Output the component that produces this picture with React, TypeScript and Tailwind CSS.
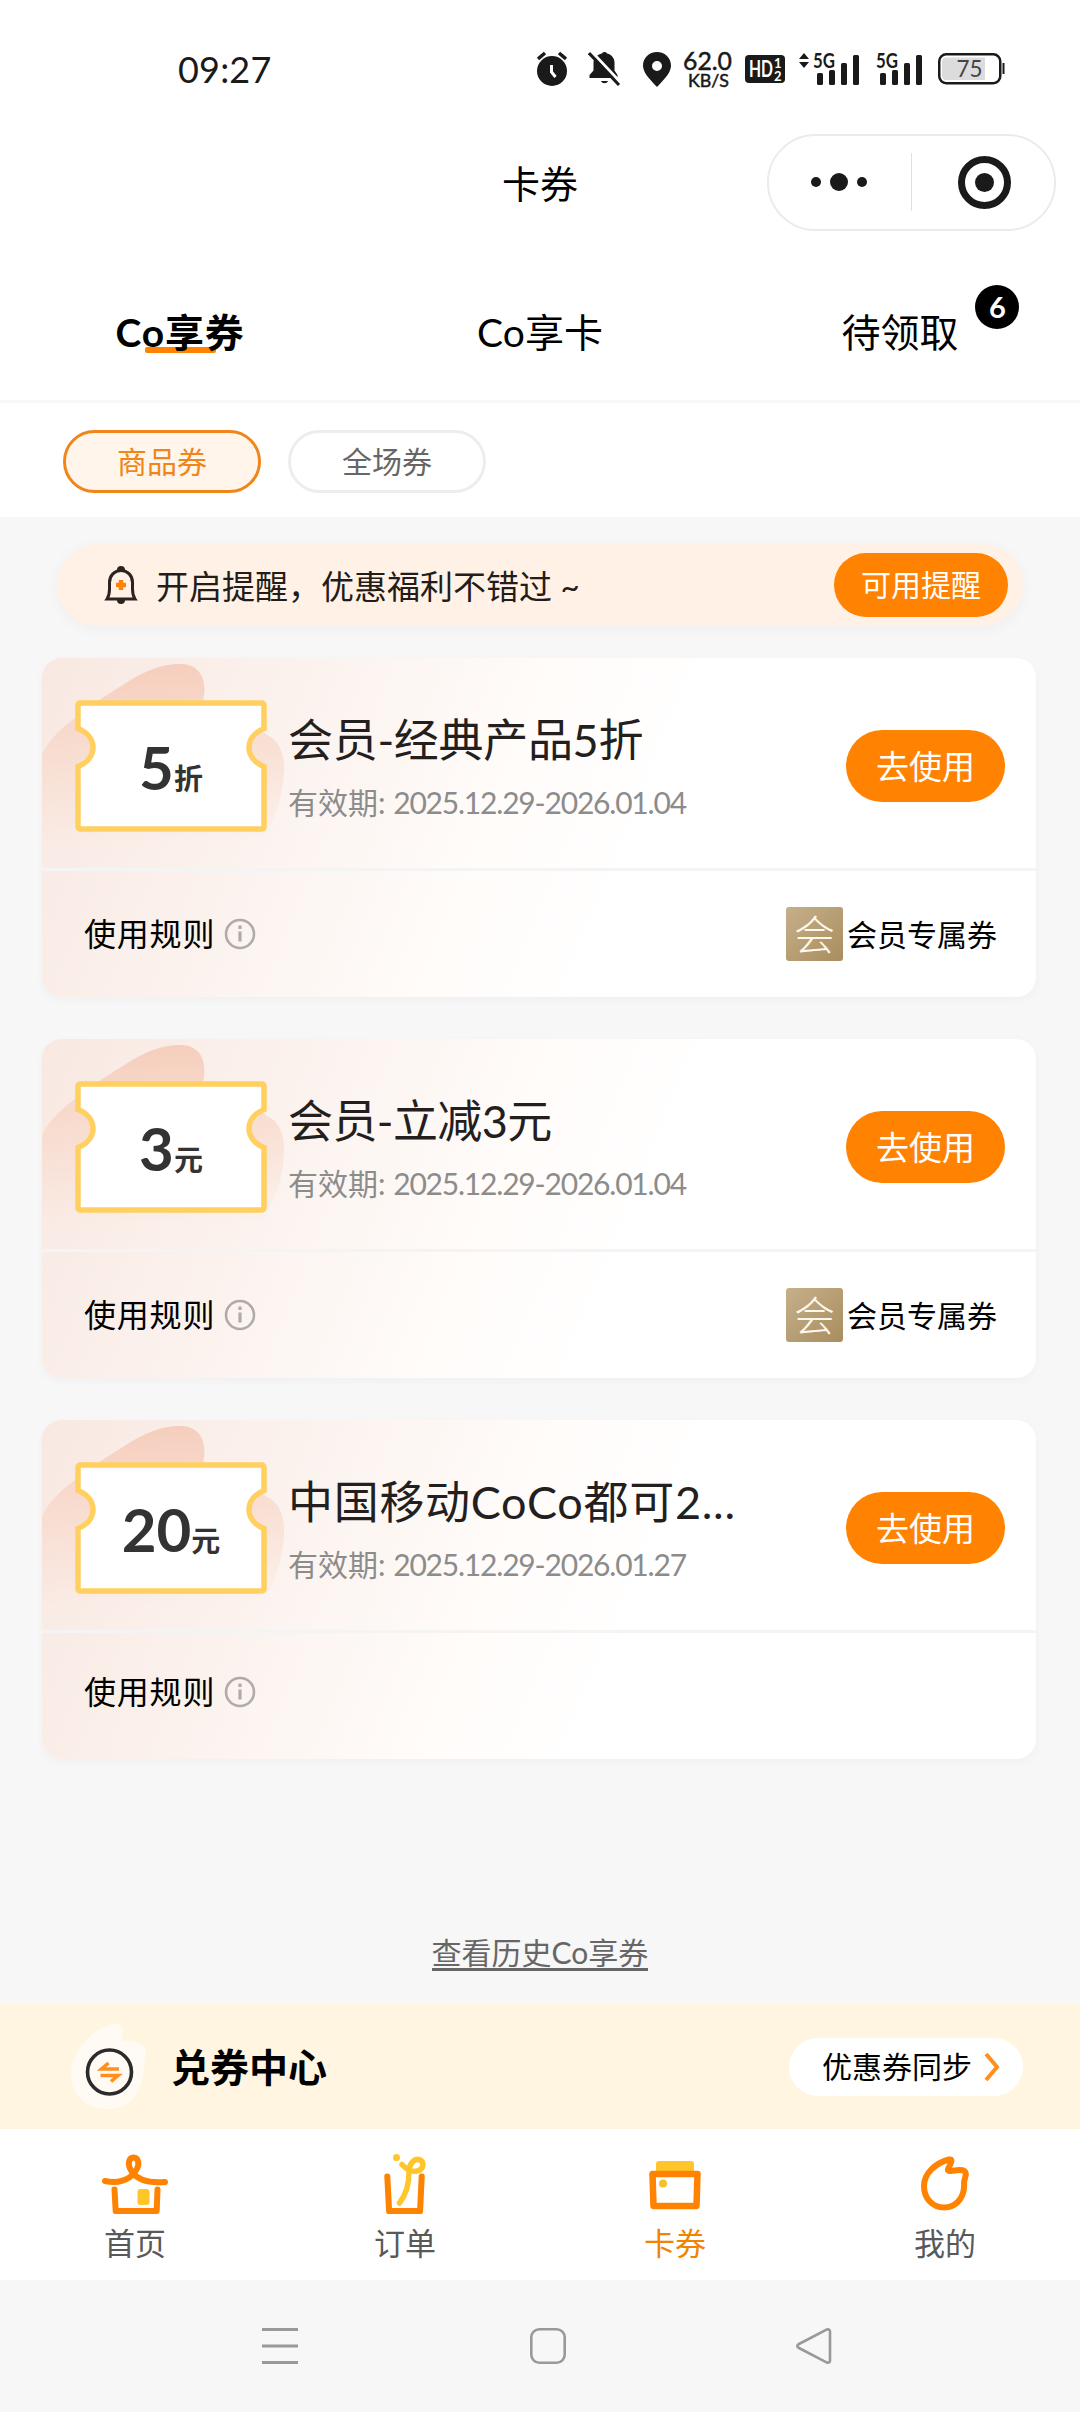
const coupons = [
  { amount: '5', unit: '折', title: '会员-经典产品5折', tracking: 'tracking-[-0.3px]', valid: '2025.12.29-2026.01.04', member: true },
  { amount: '3', unit: '元', title: '会员-立减3元', tracking: 'tracking-[-0.6px]', valid: '2025.12.29-2026.01.04', member: true },
  { amount: '20', unit: '元', title: '中国移动CoCo都可2...', tracking: 'tracking-[0.7px]', valid: '2025.12.29-2026.01.27', member: false },
]

function Signal({ arrows }: { arrows?: boolean }) {
  return (
    <svg width="62" height="36" viewBox="0 0 62 36" fill="#1a1a1a" className="overflow-visible">
      {arrows && <path d="M6 2l5 6H1zM6 17l5-6H1z" />}
      <text x="15" y="17" fontSize="20" fontWeight="700" textLength="22" lengthAdjust="spacingAndGlyphs">5G</text>
      <rect x="19" y="22" width="6" height="12" rx="1.5" />
      <rect x="31" y="19" width="6" height="15" rx="1.5" />
      <rect x="43" y="12" width="6" height="22" rx="1.5" />
      <rect x="55" y="4" width="6" height="30" rx="1.5" />
    </svg>
  )
}

function StatusBar() {
  return (
    <div className="flex h-[112px] items-center pt-[26px] pl-[178px] text-[#1a1a1a]">
      <span className="w-[359px] text-[36px] leading-none tracking-[0.2px]">09:27</span>

      <svg width="30" height="36" viewBox="0 0 30 36" className="mr-[21px]">
        <circle cx="15" cy="20" r="15" fill="#1a1a1a" />
        <path d="M1 8l7-6M29 8l-7-6" stroke="#1a1a1a" strokeWidth="3.5" />
        <path d="M14.5 14v7l4 5" fill="none" stroke="#fff" strokeWidth="3" />
      </svg>

      <svg width="33" height="36" viewBox="0 0 33 36" className="mr-[22px]">
        <path d="M14 2.5c1-2 4-2 5 0c5 1 7.500 5 7.500 9v8l3 4.500v3H1.500v-3l4-4.500v-8c0-4 3.500-8 8.500-9z" fill="#1a1a1a" />
        <path d="M13 30h7c-1 3-6 3-7 0z" fill="#1a1a1a" />
        <path d="M3 0l31 33" stroke="#fff" strokeWidth="3" />
        <path d="M1 2l30 32" stroke="#1a1a1a" strokeWidth="3" />
      </svg>

      <svg width="28" height="36" viewBox="0 0 28 36" className="mr-[12px]">
        <path fillRule="evenodd" d="M14 1c8 0 14 6 14 13.500c0 7-6 13-14 21.500c-8-8.500-14-14.500-14-21.500c0-7.500 6-13.500 14-13.500zm0 9a5 5 0 1 0 0 10a5 5 0 0 0 0-10z" fill="#1a1a1a" />
      </svg>

      <svg width="50" height="38" viewBox="0 0 50 38" className="mr-[12px] overflow-visible" fill="#1a1a1a" stroke="#1a1a1a" strokeWidth="0.5">
        <text x="0" y="20" fontSize="25" textLength="49" lengthAdjust="spacingAndGlyphs">62.0</text>
        <text x="5" y="37" fontSize="17" textLength="41" lengthAdjust="spacingAndGlyphs">KB/S</text>
      </svg>

      <svg width="40" height="28" viewBox="0 0 40 28" className="mr-[13px] overflow-visible" fill="#fff">
        <rect width="40" height="28" rx="4" fill="#1a1a1a" />
        <text x="4" y="22" fontSize="23" fontWeight="700" textLength="24" lengthAdjust="spacingAndGlyphs">HD</text>
        <text x="29" y="13" fontSize="13" fontWeight="700">1</text>
        <text x="29" y="25.500" fontSize="13" fontWeight="700">2</text>
      </svg>

      <Signal arrows />
      <div className="ml-[1px]"><Signal /></div>

      <svg width="68" height="32" viewBox="0 0 68 32" className="ml-[15px]">
        <rect x="1.250" y="1.250" width="61" height="29" rx="7" fill="#fff" stroke="#1a1a1a" strokeWidth="2.500" />
        <path d="M8 4.500h39v22.500H8a4 4 0 0 1-4-4V8.500a4 4 0 0 1 4-4z" fill="#dcdcdc" />
        <path d="M65.500 10v11" stroke="#1a1a1a" strokeWidth="2" />
        <text x="18.500" y="24" fontSize="23" fill="#444" textLength="26" lengthAdjust="spacingAndGlyphs">75</text>
      </svg>
    </div>
  )
}

function Header() {
  return (
    <div className="grid h-[140px] grid-cols-3 items-center">
      <div />
      <h1 className="pt-[1px] text-center text-[38px] leading-none">卡券</h1>
      <div className="ml-[47px] flex h-[97px] w-[289px] items-center rounded-full border-2 border-[#ebebeb]">
        <div className="flex w-[142px] items-center justify-center gap-[9px] pr-[2px]">
          <span className="size-[10px] rounded-full bg-[#1a1a1a]" />
          <span className="size-[18px] rounded-full bg-[#1a1a1a]" />
          <span className="size-[10px] rounded-full bg-[#1a1a1a]" />
        </div>
        <div className="h-[58px] w-px bg-[#e0e0e0]" />
        <div className="ml-[46px] flex size-[53px] items-center justify-center rounded-full border-[7px] border-[#1a1a1a]">
          <span className="size-[19px] rounded-full bg-[#1a1a1a]" />
        </div>
      </div>
    </div>
  )
}

function Tabs() {
  return (
    <div className="grid h-[151px] grid-cols-3 items-center border-b-[3px] border-[#f8f8f8] pt-[12px] text-center text-[39px] leading-none text-black">
      <div>
        <span className="relative inline-block font-bold tracking-[0.8px]">
          <span className="absolute -bottom-px left-[29px] h-[6px] w-[71px] rounded-[2px] bg-[#ff8200]" />
          <span className="relative">Co享券</span>
        </span>
      </div>
      <div>Co享卡</div>
      <div>
        <span className="relative inline-block">
          待领取
          <span className="absolute -top-[28px] left-[134px] flex size-[44px] items-center justify-center rounded-full bg-black text-[29px] font-bold text-white">
            6
          </span>
        </span>
      </div>
    </div>
  )
}

function BellIcon() {
  return (
    <svg width="34" height="40" viewBox="0 0 34 40">
      <path d="M13 5a4 4 0 0 1 8 0z" fill="#2d2320" />
      <path d="M3 34c2-3 2.500-6 2.500-10v-6.500c0-7 5-12 11.500-12s11.500 5 11.500 12v6.500c0 4 .5 7 2.500 10z" fill="none" stroke="#2d2320" strokeWidth="3" />
      <path d="M13 35h8a4 4 0 0 1-8 0z" fill="#2d2320" />
      <path d="M17 15v10M12 20h10" stroke="#ff8200" strokeWidth="4.500" />
    </svg>
  )
}

function Notice() {
  return (
    <div className="mx-[57px] flex h-[82px] items-center rounded-full bg-[#fff1e6] pr-[15px] pl-[47px] shadow-[0_3px_14px_rgba(0,0,0,0.04)]">
      <BellIcon />
      <p className="ml-[18px] flex-1 pt-[2px] text-[33px] leading-none whitespace-nowrap text-[#231c18]">
        开启提醒，优惠福利不错过 ~
      </p>
      <button className="h-[64px] w-[174px] rounded-full bg-[#ff8200] pb-[2px] text-[30px] leading-none text-white">可用提醒</button>
    </div>
  )
}

function Ticket({ amount, unit }: { amount: string; unit: string }) {
  return (
    <div className="relative h-[132px] w-[192px] shrink-0">
      <svg width="192" height="132" viewBox="0 0 192 132" className="absolute inset-0">
        <path
          d="M3 5a2 2 0 0 1 2-2H187a2 2 0 0 1 2 2V28.500c-20 8-20 30 0 38V127a2 2 0 0 1-2 2H5a2 2 0 0 1-2-2V66.500c20-8 20-30 0-38z"
          fill="#fff"
          stroke="#ffd060"
          strokeWidth="5.500"
        />
      </svg>
      <div className="relative flex h-full items-baseline justify-center pt-[37px] font-bold text-[#333]">
        <span className="text-[60px] leading-none">{amount}</span>
        <span className="text-[29px] leading-none">{unit}</span>
      </div>
    </div>
  )
}

function PeachBackdrop({ id }: { id: string }) {
  return (
    <svg width="260" height="205" viewBox="0 0 260 205" className="absolute top-0 left-0">
      <defs>
        <linearGradient id={id} x1="0" y1="0" x2="0" y2="1">
          <stop offset="0" stopColor="#f4c3ae" stopOpacity="0.75" />
          <stop offset="0.500" stopColor="#f8d3c2" stopOpacity="0.500" />
          <stop offset="0.900" stopColor="#f8d3c2" stopOpacity="0" />
        </linearGradient>
      </defs>
      <path
        d="M0 96C8 80 20 70 33 60C52 45 60 40 84 25C102 13 120 6 138 6C158 6 166 22 161 43C158 60 152 72 158 76C180 72 215 66 225 77C238 82 243 98 242 115C240 150 225 185 200 205H0z"
        fill={`url(#${id})`}
      />
    </svg>
  )
}

function CouponCard({ coupon, index }: { coupon: (typeof coupons)[number]; index: number }) {
  return (
    <div className="relative h-[339px] rounded-[20px] bg-[linear-gradient(112deg,#f8e8e1_0%,#fcf4f0_28%,#fffcfa_46%,#ffffff_60%)] shadow-[0_3px_10px_rgba(0,0,0,0.03)]">
      <div className="absolute inset-0 overflow-hidden rounded-[20px]">
        <PeachBackdrop id={`peach-${index}`} />
      </div>

      <div className="relative flex h-[213px] w-[996px] items-center border-b-[3px] border-[#f4f4f4] pt-[6px] pr-[33px] pl-[33px]">
        <Ticket amount={coupon.amount} unit={coupon.unit} />
        <div className="ml-[21px] flex-1 pt-[4px]">
          <h2 className={`text-[45px] leading-[50px] whitespace-nowrap text-[#231f1f] ${coupon.tracking}`}>{coupon.title}</h2>
          <p className="mt-[17px] text-[30px] leading-[40px] whitespace-nowrap text-[#8c8c8c]">
            有效期: <span className="tracking-[-1.2px]">{coupon.valid}</span>
          </p>
        </div>
        <button className="h-[72px] w-[159px] rounded-full bg-[#ff8200] text-[33px] leading-none text-white">去使用</button>
      </div>

      <div className={`relative flex items-center pr-[39px] pl-[42px] ${coupon.member ? 'h-[126px]' : 'h-[118px]'}`}>
        <span className="text-[32px] leading-none tracking-[0.8px] text-black">使用规则</span>
        <svg width="32" height="32" viewBox="0 0 32 32" className="ml-[9px]" fill="none" stroke="#b0abaa">
          <circle cx="16" cy="16" r="14" strokeWidth="2.600" />
          <path d="M16 13.500v10M16 7.500v3.500" strokeWidth="3.200" />
        </svg>
        {coupon.member && (
          <div className="ml-auto flex items-center">
            <span className="flex h-[54px] w-[57px] items-center justify-center rounded-[3px] bg-linear-to-br from-[#c6b08a] to-[#a88d5e] text-[41px] leading-none font-light text-[#fff8ec]">
              会
            </span>
            <span className="ml-[4px] text-[30px] leading-none text-black">会员专属券</span>
          </div>
        )}
      </div>
    </div>
  )
}

function ExchangeBar() {
  return (
    <div className="flex h-[125px] items-center bg-[#fff5e0] pr-[57px] pl-[70px]">
      <svg width="78" height="88" viewBox="0 0 78 88">
        <path d="M1 50C2 26 26 2 46 1C55 1 54 10 51 18C63 17 78 20 76 32C73 40 75 48 73 54C68 76 55 86 38 86C16 86 1 72 1 50z" fill="#fffaf3" />
        <circle cx="39.500" cy="49" r="22" fill="none" stroke="#2b2b2b" strokeWidth="3.600" />
        <path d="M49 46H31.500l7-6M30.500 52.500H48l-7 6" fill="none" stroke="#ff9020" strokeWidth="3.600" />
      </svg>
      <span className="ml-[23px] pt-[2px] text-[39px] leading-none font-bold text-black">兑券中心</span>
      <button className="ml-auto flex h-[58px] w-[234px] items-center rounded-full bg-white pl-[33px] text-[30px] leading-none text-black">
        <span className="pb-[2px]">优惠券同步</span>
        <svg width="16" height="28" viewBox="0 0 16 28" className="ml-[12px]">
          <path d="M2 1l11 13L2 27" fill="none" stroke="#ff9020" strokeWidth="4" />
        </svg>
      </button>
    </div>
  )
}

function HomeIcon() {
  return (
    <svg width="68" height="62" viewBox="0 0 68 62" fill="none" stroke="#ff8200" strokeWidth="6" strokeLinecap="round" strokeLinejoin="round">
      <path d="M4 28c13 3 24-1 30-9c6-8 3-14.500-1.500-14.500s-7 6.500-1.500 14.500c6 8 17 11.500 33 10" />
      <path d="M13.500 36.500l1.200 21.500h41l.8-21.500" />
      <rect x="36.500" y="36" width="12" height="16" rx="3" fill="#ffc62b" stroke="none" />
    </svg>
  )
}

function OrderIcon() {
  return (
    <svg width="68" height="62" viewBox="0 0 68 62" fill="none" strokeWidth="6" strokeLinecap="round" strokeLinejoin="round">
      <path d="M16.300 23.500l1.800 34.500h31l1.600-34.500" stroke="#ff8200" />
      <path d="M28.500 50c7-9 9.500-18 9.500-31c0-8 5-13.500 10-12.500c6 1.500 5 10-2 11.500c-6 1-11-2-15-6.500" stroke="#ffc62b" strokeWidth="5.500" />
      <circle cx="25.500" cy="4.500" r="3.500" fill="#ffc62b" />
    </svg>
  )
}

function CardIcon() {
  return (
    <svg width="68" height="62" viewBox="0 0 68 62">
      <path d="M15 11a3 3 0 0 1 3-3h32a3 3 0 0 1 3 3v9H15z" fill="#ffc62b" />
      <path d="M11.500 21h45l-1 32h-43z" fill="#fff" stroke="#ff8200" strokeWidth="6.500" strokeLinejoin="round" />
      <circle cx="22" cy="30.500" r="4" fill="#f6bf2d" />
    </svg>
  )
}

function MineIcon() {
  return (
    <svg width="68" height="62" viewBox="0 0 68 62">
      <path
        d="M13 33C13 20 25 10 38 6.500C41 6 41 8 39.500 11L37 16C36.500 18 38 18 40 18C45 17.500 50 16 53.500 18C56 20 54.500 23 53.500 27C52.500 31 53.500 31 53 35C52 46 44 54.500 33.500 54.500C21 54.500 13 45 13 33z"
        fill="none"
        stroke="#ff8200"
        strokeWidth="6"
        strokeLinejoin="round"
      />
    </svg>
  )
}

function TabBar() {
  const items = [
    { label: '首页', icon: <HomeIcon /> },
    { label: '订单', icon: <OrderIcon /> },
    { label: '卡券', icon: <CardIcon />, active: true },
    { label: '我的', icon: <MineIcon /> },
  ]

  return (
    <nav className="grid h-[151px] grid-cols-4 bg-white pt-[24px]">
      {items.map((item) => (
        <div key={item.label} className="flex flex-col items-center">
          {item.icon}
          <span className={`mt-[13px] text-[31px] leading-none ${item.active ? 'text-[#f08300]' : 'text-[#595959]'}`}>
            {item.label}
          </span>
        </div>
      ))}
    </nav>
  )
}

function SystemNav() {
  return (
    <div className="flex h-[132px] items-center bg-[#f7f7f7] pl-[261px]">
      <svg width="38" height="38" viewBox="0 0 38 38" stroke="#999" strokeWidth="3">
        <path d="M1 2.500h36M1 19h36M1 35.500h36" />
      </svg>
      <svg width="38" height="38" viewBox="0 0 38 38" className="ml-[230px]" fill="none" stroke="#999" strokeWidth="2.600">
        <rect x="2.300" y="2.300" width="33.400" height="33.400" rx="8" />
      </svg>
      <svg width="38" height="38" viewBox="0 0 38 38" className="ml-[228px]" fill="none" stroke="#999" strokeWidth="2.600">
        <path d="M31.500 2.600L4 17q-3.500 2 0 4L31.500 35.400q3.500 1 3.500-2V4.600q0-3-3.500-2z" />
      </svg>
    </div>
  )
}

export default function App() {
  return (
    <div className="flex h-[2412px] w-[1080px] flex-col overflow-hidden bg-white font-['Lato','Noto_Sans_CJK_SC',sans-serif]">
      <StatusBar />
      <Header />
      <Tabs />

      <div className="flex h-[114px] gap-[27px] pt-[27px] pl-[63px] text-[30px] leading-none">
        <button className="h-[63px] w-[198px] rounded-full border-[3px] border-[#f08519] bg-[#fff5eb] pb-[2px] text-[#f08519]">商品券</button>
        <button className="h-[63px] w-[198px] rounded-full border-[3px] border-[#ededed] pb-[2px] text-[#666]">全场券</button>
      </div>

      <main className="flex h-[1487px] flex-col bg-[#f7f7f7] pt-[27px]">
        <Notice />
        <div className="mt-[32px] mr-[44px] ml-[42px] flex flex-col gap-[42px]">
          {coupons.map((coupon, i) => (
            <CouponCard key={coupon.title} coupon={coupon} index={i} />
          ))}
        </div>
        <a className="mt-[177px] self-center border-b-[3px] border-[#666] text-[30px] leading-[32px] text-[#666]">
          查看历史Co享券
        </a>
      </main>

      <ExchangeBar />
      <TabBar />
      <SystemNav />
    </div>
  )
}
